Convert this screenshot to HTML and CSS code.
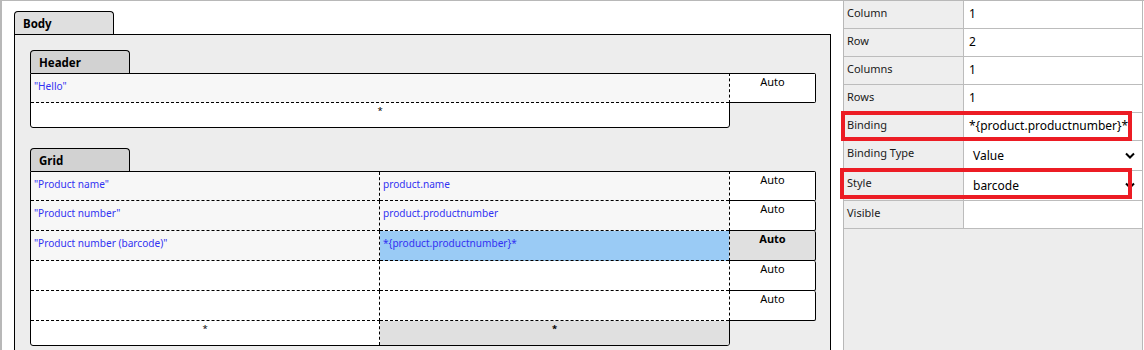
FILE: index.html
```html
<!DOCTYPE html>
<html lang="en">

<head>
  <meta charset="UTF-8">
  <meta name="viewport" content="width=device-width, initial-scale=1.0">
  <title>Report designer</title>
  <link rel="stylesheet" href="styles.css">
</head>

<body>
  <div class="app">
    <!-- left: the layout of the report -->
    <div class="designer">
      <div class="tab">Body</div>
      <div class="body-box">

        <div class="section">
          <div class="tab">Header</div>
          <div class="sheet">
            <div class="cells header-cells">
              <div class="cell alt"><span class="expr">"Hello"</span></div>
              <div class="cell foot">*</div>
            </div>
            <div class="sizes">
              <div class="size-box">Auto</div>
            </div>
          </div>
        </div>

        <div class="section">
          <div class="tab">Grid</div>
          <div class="sheet">
            <div class="cells grid-cells">
              <div class="cell alt c1"><span class="expr">"Product name"</span></div>
              <div class="cell alt"><span class="expr">product.name</span></div>
              <div class="cell alt c1"><span class="expr">"Product number"</span></div>
              <div class="cell alt"><span class="expr">product.productnumber</span></div>
              <div class="cell alt c1"><span class="expr">"Product number (barcode)"</span></div>
              <div class="cell selected"><span class="expr">*{product.productnumber}*</span></div>
              <div class="cell c1"></div>
              <div class="cell"></div>
              <div class="cell c1"></div>
              <div class="cell"></div>
              <div class="cell foot c1">*</div>
              <div class="cell foot current">*</div>
            </div>
            <div class="sizes">
              <div class="size-box">Auto</div>
              <div class="size-box">Auto</div>
              <div class="size-box current">Auto</div>
              <div class="size-box">Auto</div>
              <div class="size-box">Auto</div>
            </div>
          </div>
        </div>

      </div>
    </div>

    <!-- right: properties of the selected cell -->
    <div class="props">
      <div class="prop">
        <div class="prop-label">Column</div>
        <div class="prop-value">1</div>
      </div>
      <div class="prop">
        <div class="prop-label">Row</div>
        <div class="prop-value">2</div>
      </div>
      <div class="prop">
        <div class="prop-label">Columns</div>
        <div class="prop-value">1</div>
      </div>
      <div class="prop">
        <div class="prop-label">Rows</div>
        <div class="prop-value">1</div>
      </div>
      <div class="prop mark mark-binding">
        <div class="prop-label">Binding</div>
        <div class="prop-value">*{product.productnumber}*</div>
      </div>
      <div class="prop tall">
        <div class="prop-label">Binding Type</div>
        <div class="prop-value select">
          <span>Value</span>
          <svg width="10" height="7" viewBox="0 0 10 7"><polyline points="1,1.5 5,5.5 9,1.5" fill="none" stroke="#000" stroke-width="2"/></svg>
        </div>
      </div>
      <div class="prop tall mark mark-style">
        <div class="prop-label">Style</div>
        <div class="prop-value select">
          <span>barcode</span>
          <svg width="10" height="7" viewBox="0 0 10 7"><polyline points="1,1.5 5,5.5 9,1.5" fill="none" stroke="#000" stroke-width="2"/></svg>
        </div>
      </div>
      <div class="prop">
        <div class="prop-label">Visible</div>
        <div class="prop-value"></div>
      </div>
    </div>
  </div>
</body>

</html>
```

FILE: styles.css
```css
* {
  box-sizing: border-box;
}

html,
body {
  margin: 0;
  background: #fff;
}

body {
  font-family: "Noto Sans", "Open Sans", sans-serif;
  color: #000;
}

.app {
  display: flex;
  height: 350px;
  overflow: hidden;
  border-top: 1px solid #b8b8b8;
  border-left: 2px solid #b8b8b8;
}

.designer {
  width: 841px;
  height: 349px;
  padding: 10px 12px 0;
  overflow: hidden;
  background: #fff;
}

.tab {
  width: 100px;
  height: 23px;
  padding: 4px 0 0 8px;
  border: 1px solid #000;
  border-bottom: none;
  border-radius: 4px 4px 0 0;
  background: #d2d2d2;
  font-size: 11.5px;
  font-weight: bold;
  line-height: 16px;
}

.designer > .tab {
  background: #dfdfdf;
}

.body-box {
  width: 817px;
  border: 1px solid #000;
  background: #ededed;
  padding: 15px 14px 15px 15px;
}

.section + .section {
  margin-top: 20px;
}

.sheet {
  display: flex;
  align-items: flex-start;
}

.cells {
  width: 700px;
  display: grid;
  border: 1px solid #000;
  border-radius: 0 0 3px 3px;
  background: #fff;
}

.header-cells {
  grid-template-columns: 1fr;
  grid-template-rows: 29px 24px;
}

.grid-cells {
  grid-template-columns: 349px 1fr;
  grid-template-rows: 29px 30px 30px 30px 30px 24px;
}

.cell {
  padding: 3px 3px 0;
  border-bottom: 1px dashed #000;
  line-height: 14px;
  overflow: hidden;
  white-space: nowrap;
}

.cell.c1 {
  border-right: 1px dashed #000;
}

.cell.alt {
  background: #f7f7f7;
}

.cell.selected {
  background: #9acbf5;
}

.cell.foot {
  border-bottom: none;
  padding-top: 1px;
  text-align: center;
  font-size: 9.5px;
}

.cell.foot.current {
  background: #e0e0e0;
  font-weight: bold;
  border-bottom-right-radius: 2px;
}

.expr {
  color: #3232f2;
  font-size: 10.1px;
}

/* 行高度那一列，盖住表格右边框 */
.sizes {
  width: 87px;
  margin-left: -1px;
  z-index: 1;
  display: flex;
  flex-direction: column;
}

.size-box {
  height: 30px;
  border: 1px solid #000;
  border-left: 1px dashed #000;
  border-radius: 0 2px 2px 0;
  background: #fff;
  text-align: center;
  font-size: 11px;
  line-height: 15px;
}

.size-box + .size-box {
  border-top: none;
}

.size-box.current {
  background: #e0e0e0;
  font-weight: bold;
}

.props {
  width: 300px;
  height: 349px;
  border-left: 1px solid #b8b8b8;
  border-right: 1px solid #b8b8b8;
  background: #ededed;
}

.prop {
  display: flex;
  height: 28px;
  border-bottom: 1px solid #bcbcbc;
  position: relative;
}

.prop.tall {
  height: 30px;
}

.prop-label {
  width: 120px;
  padding: 4px 0 0 3px;
  border-right: 1px solid #bcbcbc;
  background: #eeeeee;
  color: #1a1a1a;
  font-size: 11px;
  line-height: 15px;
}

.prop-value {
  flex: 1;
  padding: 4px 0 0 5px;
  background: #fff;
  font-size: 12px;
  line-height: 17px;
  white-space: nowrap;
  overflow: hidden;
}

.prop-value.select {
  display: flex;
  align-items: center;
  justify-content: space-between;
  padding: 0 7px 0 9px;
}

/* 红框标注 */
.mark::after {
  content: "";
  position: absolute;
  border: 4px solid #ec1c24;
  pointer-events: none;
}

.mark-binding::after {
  top: -2px;
  bottom: -1px;
  left: -3px;
  right: 10px;
}

.mark-style::after {
  top: -3px;
  bottom: 1px;
  left: -4px;
  right: 10px;
}
```
